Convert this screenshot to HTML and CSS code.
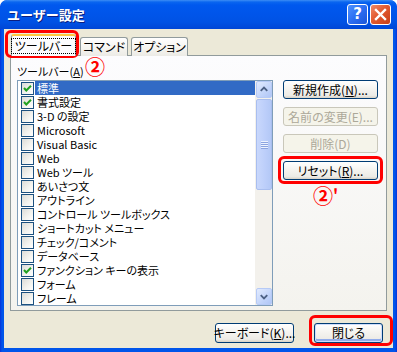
FILE: index.html
```html
<!DOCTYPE html>
<html lang="ja">
<head>
<meta charset="utf-8">
<title>ユーザー設定</title>
<link rel="stylesheet" href="styles.css">
</head>
<body>
<div class="window">
  <div class="titlebar">
    <span class="title">ユーザー設定</span>
    <div class="tb-buttons">
      <div class="tb-btn help">?</div>
      <div class="tb-btn close">
        <svg width="21" height="21" viewBox="0 0 21 21"><path d="M6 6 L15 15 M15 6 L6 15" stroke="#fff" stroke-width="2.4" stroke-linecap="square"/></svg>
      </div>
    </div>
  </div>
  <div class="client">
    <div class="tabs">
      <div class="tab active"><span class="focus">ツールバー</span></div>
      <div class="tab t2">コマンド</div>
      <div class="tab t3">オプション</div>
    </div>
    <div class="panel">
      <div class="left">
        <div class="label">ツールバー(<u>A</u>)</div>
        <div class="listbox">
          <div class="items">
            <div class="row sel"><span class="cb on"></span><span class="txt">標準</span></div>
            <div class="row"><span class="cb on"></span><span class="txt">書式設定</span></div>
            <div class="row"><span class="cb"></span><span class="txt">3-D の設定</span></div>
            <div class="row"><span class="cb"></span><span class="txt">Microsoft</span></div>
            <div class="row"><span class="cb"></span><span class="txt">Visual Basic</span></div>
            <div class="row"><span class="cb"></span><span class="txt">Web</span></div>
            <div class="row"><span class="cb"></span><span class="txt">Web ツール</span></div>
            <div class="row"><span class="cb"></span><span class="txt">あいさつ文</span></div>
            <div class="row"><span class="cb"></span><span class="txt">アウトライン</span></div>
            <div class="row"><span class="cb"></span><span class="txt">コントロール ツールボックス</span></div>
            <div class="row"><span class="cb"></span><span class="txt">ショートカット メニュー</span></div>
            <div class="row"><span class="cb"></span><span class="txt">チェック/コメント</span></div>
            <div class="row"><span class="cb"></span><span class="txt">データベース</span></div>
            <div class="row"><span class="cb on"></span><span class="txt">ファンクション キーの表示</span></div>
            <div class="row"><span class="cb"></span><span class="txt">フォーム</span></div>
            <div class="row"><span class="cb"></span><span class="txt">フレーム</span></div>
          </div>
          <div class="scrollbar">
            <div class="sb-btn"><svg width="15" height="15" viewBox="0 0 15 15"><path d="M4 9 L7.5 5.5 L11 9" fill="none" stroke="#4D6185" stroke-width="2"/></svg></div>
            <div class="thumb"><span class="grip"></span></div>
            <div class="track"></div>
            <div class="sb-btn"><svg width="15" height="15" viewBox="0 0 15 15"><path d="M4 6 L7.5 9.5 L11 6" fill="none" stroke="#4D6185" stroke-width="2"/></svg></div>
          </div>
        </div>
      </div>
      <div class="right">
        <div class="btn">新規作成(<u>N</u>)...</div>
        <div class="btn disabled">名前の変更(E)...</div>
        <div class="btn disabled">削除(D)</div>
        <div class="btn">リセット(<u>R</u>)...</div>
      </div>
    </div>
    <div class="bottom">
      <div class="btn kb">キーボード(<u>K</u>)...</div>
      <div class="btn closebtn">閉じる</div>
    </div>
  </div>
  <div class="mark m-tab"></div>
  <div class="mark m-reset"></div>
  <div class="mark m-close"></div>
  <div class="num n1">②</div>
  <div class="num n2">②<span class="prime">'</span></div>
</div>
</body>
</html>
```
FILE: styles.css
```css
* { box-sizing: border-box; }
body {
  margin: 0; background: #fff;
  font-family: "Noto Sans CJK JP", "Noto Sans", sans-serif; font-size: 12px; color: #000;
  font-feature-settings: "palt" 1;
}
u { text-decoration: underline; text-underline-offset: 1px; }

.window {
  width: 397px; height: 352px; position: relative;
  background: linear-gradient(90deg, #0831D9 0, #0055EA 2px, #0055EA 395px, #0831D9 397px);
  border-radius: 7px 7px 0 0;
  display: flex; flex-direction: column; overflow: hidden;
}
.titlebar {
  height: 29px; flex: none; display: flex; align-items: center; justify-content: space-between;
  padding: 0 6px 0 7px;
  border-radius: 7px 7px 0 0;
  background: linear-gradient(#3D8DF5 0, #0A66F0 2px, #0058EE 5px, #0055EA 14px, #0052E4 22px, #0046D6 29px);
}
.title { color: #fff; font-weight: bold; font-size: 13px; font-feature-settings: normal; text-shadow: 1px 1px 0 #0A1E80; line-height: 1; }
.tb-buttons { display: flex; gap: 2px; }
.tb-btn {
  width: 21px; height: 21px; border: 1px solid #fff; border-radius: 3px;
  display: flex; align-items: center; justify-content: center;
}
.help {
  background: linear-gradient(135deg, #4E92FF 0, #2C6EF2 50%, #1B55D8 100%);
  color: #fff; font-family: "DejaVu Sans", sans-serif; font-weight: bold; font-size: 15px; line-height: 1;
}
.close { background: linear-gradient(135deg, #F08A68 0, #E25A30 45%, #C83E17 100%); }
.close svg { display: block; margin: -1px; }

.client {
  flex: 1; margin: 0 4px 4px; background: #ECE9D8;
  padding: 6px 10px 0 6px;
  display: flex; flex-direction: column;
}
.tabs { display: flex; align-items: flex-end; height: 21px; margin-bottom: -1px; position: relative; z-index: 1; padding-left: 1px; }
.tab {
  height: 19px; border: 1px solid #919B9C; border-bottom: none; border-radius: 3px 3px 0 0;
  background: linear-gradient(#FFFFFF, #F4F3EE 60%, #ECEBE6);
  display: flex; align-items: center; justify-content: center; line-height: 1; white-space: nowrap;
}
.tab.active { height: 22px; width: 65px; background: #FCFCFE; border-top: 2px solid #FFC83C; }
.tab.t2 { width: 48px; margin-left: 4px; }
.tab.t3 { width: 57px; margin-left: 3px; }
.focus { outline: 1px dotted #000; outline-offset: 1px; padding: 0 2px; }

.panel {
  width: 377px; height: 256px; border: 1px solid #919B9C;
  background: linear-gradient(#FCFCFE, #F4F3EE);
  display: flex; gap: 10px; padding: 7px 0 0 6px;
}
.left { width: 256px; display: flex; flex-direction: column; }
.label { height: 16px; line-height: 16px; margin-bottom: 1px; white-space: nowrap; font-size: 11px; }
.listbox {
  height: 226px; border: 1px solid #7F9DB9; background: #fff; display: flex;
}
.items { flex: 1; overflow: hidden; }
.row { height: 14px; display: flex; align-items: center; white-space: nowrap; font-size: 11px; }
.cb {
  width: 13px; height: 13px; flex: none; margin-left: 3px; border: 1px solid #1C5180;
  background: linear-gradient(135deg, #DCDCD7 0, #F4F4F0 60%, #FFFFFF 100%);
}
.cb.on {
  background:
    url("data:image/svg+xml;utf8,<svg xmlns='http://www.w3.org/2000/svg' width='11' height='11'><path d='M2 5 L4.3 7.5 L9 2.8' fill='none' stroke='%2321A121' stroke-width='2'/></svg>") center/11px 11px no-repeat,
    linear-gradient(135deg, #DCDCD7 0, #F4F4F0 60%, #FFFFFF 100%);
}
.txt { flex: 1; height: 14px; line-height: 14px; margin-left: 1px; padding-left: 2px; }
.row.sel .txt { background: #316AC5; color: #fff; }

.scrollbar { width: 17px; flex: none; display: flex; flex-direction: column; background: #F3F1EC; padding-left: 1px; }
.sb-btn {
  height: 17px; flex: none; border: 1px solid #B6CAF6; border-radius: 2px;
  background: linear-gradient(135deg, #E2EBFE, #C2D4FA 60%, #B0C6F6);
  display: flex; align-items: center; justify-content: center;
}
.thumb {
  height: 91px; flex: none; margin-top: 1px; border: 1px solid #A9BEEF; border-radius: 2px;
  background: linear-gradient(90deg, #C9D8FC, #BCCEFA 60%, #B3C8F6);
  display: flex; align-items: center; justify-content: center;
}
.grip { width: 7px; height: 8px; background: repeating-linear-gradient(#EEF3FE 0 1px, #8CA4E0 1px 2px); }
.track { flex: 1; }

.right { width: 95px; display: flex; flex-direction: column; gap: 8px; padding-top: 17px; }
.btn {
  height: 19px; border: 1px solid #003C74; border-radius: 3px;
  background: linear-gradient(#FFFFFF, #F5F4F0 45%, #ECEBE6 85%, #D8D2C6);
  display: flex; align-items: center; justify-content: center; line-height: 1; white-space: nowrap;
}
.btn.disabled { border-color: #C9C7BA; color: #ACA899; background: #F5F4EA; }
.bottom { display: flex; justify-content: flex-end; gap: 20px; margin-top: 12px; }
.btn.kb { width: 79px; height: 20px; }
.btn.closebtn { width: 69px; height: 20px; box-shadow: inset 0 0 0 1px #CEDDFB, inset 0 -2px 0 1px #91ACEB; }

.mark { position: absolute; border: 3px solid #F00; border-radius: 6px; }
.m-tab { left: 5px; top: 30px; width: 74px; height: 28px; }
.m-reset { left: 278px; top: 156px; width: 105px; height: 28px; }
.m-close { left: 309px; top: 315px; width: 84px; height: 31px; }
.num { position: absolute; color: #F00; font-weight: bold; font-size: 20px; line-height: 1; font-feature-settings: normal; }
.n1 { left: 85px; top: 57px; }
.n2 { left: 313px; top: 186px; }
.prime { font-size: 16px; vertical-align: top; }
```
